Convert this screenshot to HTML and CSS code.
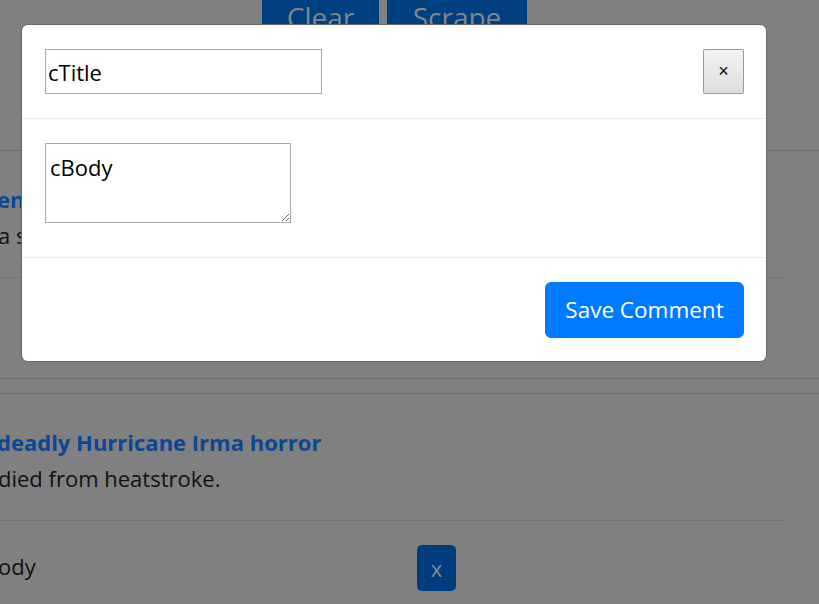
FILE: index.html
```html
<!DOCTYPE html>
<html lang="en">
<head>
<meta charset="utf-8">
<title>Comment</title>
<link rel="stylesheet" href="styles.css">
</head>
<body>
<div class="page">
  <div class="actions">
    <button class="btn-lg">Clear</button>
    <button class="btn-lg">Scrape</button>
  </div>
  <div class="card first">
    <div class="card-body">
      <div class="title">en</div>
      <div class="summary">a s</div>
      <div class="rule"></div>
      <div class="comment-row">
        <span class="comment-text"></span>
        <button class="del">x</button>
      </div>
    </div>
  </div>
  <div class="card">
    <div class="card-body">
      <div class="title">deadly Hurricane Irma horror</div>
      <div class="summary">died from heatstroke.</div>
      <div class="rule"></div>
      <div class="comment-row">
        <span class="comment-text">ody</span>
        <button class="del">x</button>
      </div>
    </div>
  </div>
</div>

<div class="modal">
  <div class="modal-header">
    <input class="title-input" type="text" value="cTitle">
    <button class="close-btn">&times;</button>
  </div>
  <div class="modal-body">
    <textarea class="body-input">cBody</textarea>
  </div>
  <div class="modal-footer">
    <button class="save-btn">Save Comment</button>
  </div>
</div>
</body>
</html>
```

FILE: styles.css
```css
html, body {
  margin: 0;
  padding: 0;
  height: 100%;
  overflow: hidden;
}
body {
  background: #808080;
  font-family: "Open Sans", "Noto Sans", sans-serif;
  color: #111214;
}
.page {
  position: relative;
}
.actions {
  display: flex;
  gap: 8px;
  padding-left: 262px;
  margin-top: -18px;
  height: 168px;
}
.btn-lg {
  font-family: inherit;
  font-size: 28px;
  line-height: 45px;
  padding: 12px 0;
  border: 1px solid #003f80;
  border-radius: 6px;
  background: #003f80;
  color: #858585;
  height: 71px;
}
.btn-lg:first-child { width: 117px; }
.btn-lg:last-child { width: 140px; }

.card {
  border-top: 1px solid #6b6b6b;
  border-bottom: 1px solid #6b6b6b;
  height: 227px;
  box-sizing: border-box;
}
.card.first {
  height: 229px;
  margin-bottom: 14px;
}
.card-body {
  padding-top: 30px;
  width: 783px;
}
.title {
  font-weight: 700;
  font-size: 22px;
  line-height: 36px;
  color: #0a4896;
  white-space: nowrap;
  margin-left: -3px;
}
.summary {
  font-size: 22px;
  line-height: 36px;
  color: #111111;
  white-space: nowrap;
  margin-left: -2px;
}
.rule {
  margin-top: 24px;
  border-top: 1px solid #727272;
}
.comment-row {
  display: flex;
  align-items: center;
  padding-top: 24px;
}
.comment-text {
  width: 419px;
  font-size: 22px;
  margin-left: -2px;
  margin-top: -4px;
  color: #111111;
}
.del {
  width: 39px;
  height: 46px;
  border: 0;
  border-radius: 5px;
  background: #003d7e;
  color: #8a8a8a;
  font-family: inherit;
  font-size: 22px;
  padding: 0;
}

.modal {
  position: absolute;
  left: 21px;
  top: 24px;
  width: 746px;
  box-sizing: border-box;
  background: #fff;
  border: 1px solid #666;
  border-radius: 7px;
  overflow: hidden;
}
.modal-header {
  display: flex;
  justify-content: space-between;
  align-items: flex-start;
  padding: 24px 22px 24px 23px;
  border-bottom: 1px solid #e9ecef;
}
.title-input {
  width: 277px;
  height: 45px;
  box-sizing: border-box;
  border: 1px solid #a9a9a9;
  padding: 1px 2px;
  font-family: "Open Sans", sans-serif;
  font-size: 22px;
  color: #000;
  margin: 0;
  outline: none;
}
.close-btn {
  width: 41px;
  height: 45px;
  box-sizing: border-box;
  border: 1px solid #9a9a9a;
  border-radius: 2px;
  background: linear-gradient(#f3f3f3, #dedede);
  font-size: 18px;
  color: #000;
  padding: 0;
  margin: 0;
}
.modal-body {
  padding: 24px 23px 34px;
  border-bottom: 1px solid #e9ecef;
}
.body-input {
  display: block;
  width: 246px;
  height: 80px;
  box-sizing: border-box;
  border: 1px solid #a9a9a9;
  padding: 8px 4px;
  font-family: "Open Sans", sans-serif;
  font-size: 22px;
  color: #000;
  margin: 0;
  resize: both;
  outline: none;
}
.modal-footer {
  display: flex;
  justify-content: flex-end;
  padding: 24px 22px 23px;
}
.save-btn {
  height: 56px;
  width: 199px;
  box-sizing: border-box;
  border: 1px solid #007bff;
  border-radius: 6px;
  background: #007bff;
  color: #fff;
  font-family: "Open Sans", sans-serif;
  font-size: 22.5px;
  line-height: 36px;
  padding: 9px 0;
}
```
